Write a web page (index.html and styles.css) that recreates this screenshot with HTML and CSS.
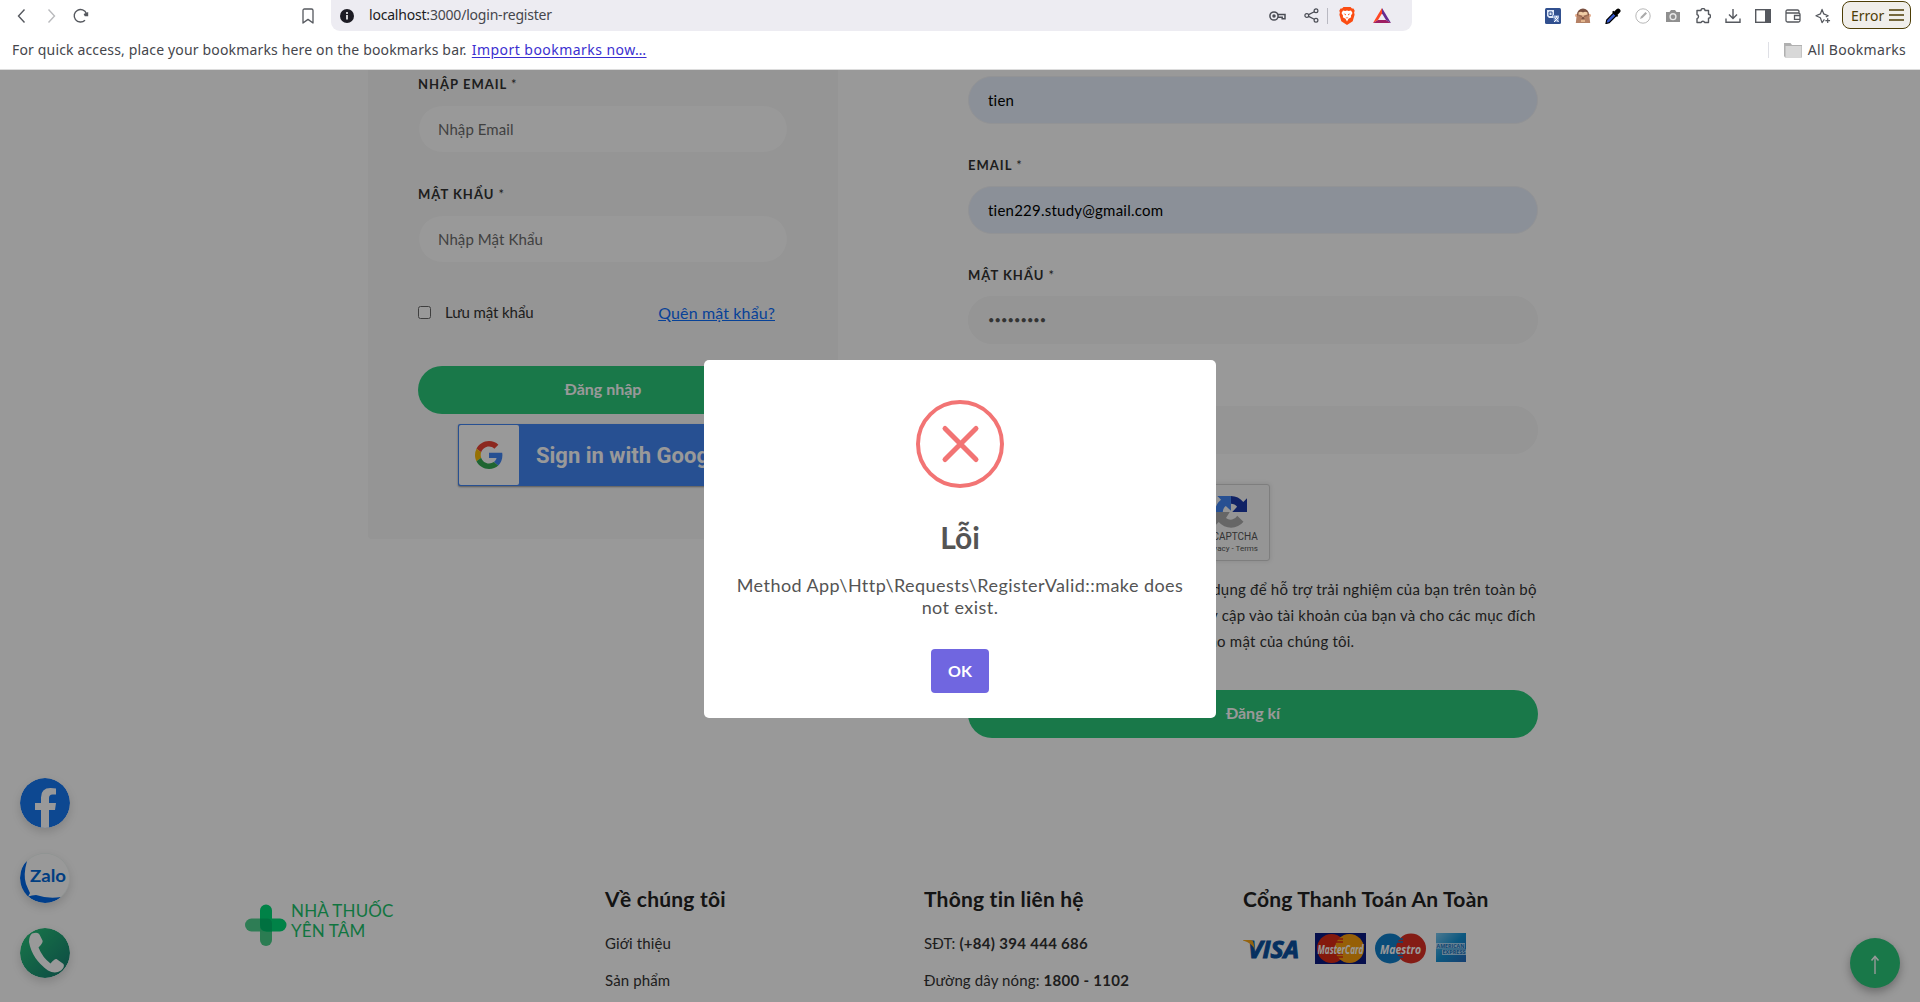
FILE: index.html
```html
<!DOCTYPE html>
<html lang="vi">
<head>
<meta charset="utf-8">
<title>Đăng nhập - Nhà thuốc Yên Tâm</title>
<link rel="stylesheet" href="styles.css">
</head>
<body>
<header class="browser">
  <div class="toolbar">
    <div class="nav">
      <svg width="9" height="16" viewBox="0 0 9 16" fill="none" stroke="#55585e" stroke-width="1.4"><path d="M7.500 1.500 1.500 8l6 6.500"/></svg>
      <svg width="9" height="16" viewBox="0 0 9 16" fill="none" stroke="#b9babd" stroke-width="1.400"><path d="M1.500 1.500 7.500 8l-6 6.500"/></svg>
      <svg width="16" height="16" viewBox="0 0 16 16" fill="none" stroke="#55585e" stroke-width="1.400"><path d="M12 12.200A6.300 6.300 0 1 1 13.400 5.500"/><path d="M15.200 4v4.200h-3.400l-1.200-2.200z" fill="#55585e" stroke="none"/></svg>
    </div>
    <svg class="save" width="12" height="16" viewBox="0 0 12 16" fill="none" stroke="#55585e" stroke-width="1.300" stroke-linejoin="round"><path d="M1 2.500Q1 1 2.500 1h7Q11 1 11 2.500V15l-5-3.600L1 15z"/></svg>
    <div class="address">
      <svg width="14" height="14" viewBox="0 0 14 14"><circle cx="7" cy="7" r="7" fill="#1d1c24"/><circle cx="7" cy="4" r="1" fill="#fff"/><path d="M6.200 6h1.600v4.500H6.200z" fill="#fff"/></svg>
      <span class="url"><b>localhost</b>:3000/login-register</span>
      <div class="address-icons">
        <svg width="17" height="12" viewBox="0 0 17 12" fill="none" stroke="#4b4d55" stroke-width="1.500"><circle cx="5" cy="6" r="4.100"/><circle cx="5" cy="6" r="1" fill="#4b4d55"/><path d="M9 4.500h7v4.200h-2.800V7.200H9"/></svg>
        <svg width="15" height="15" viewBox="0 0 15 15" fill="none" stroke="#4b4d55" stroke-width="1.200"><circle cx="2.800" cy="7.500" r="1.900"/><circle cx="12" cy="2.800" r="1.900"/><circle cx="12" cy="12.200" r="1.900"/><path d="M4.600 6.600l5.700-2.900M4.600 8.400l5.700 2.900"/></svg>
        <i class="sep"></i>
        <svg width="16" height="18" viewBox="0 0 16 18"><path d="M4.500 0h7l1.500 1.600 1.500-.2 1.200 2.300-.6 1.800.5 2.300-1.900 6.400L8 18l-5.700-3.800L.4 7.800l.5-2.300L.3 3.700l1.200-2.300 1.500.2z" fill="#fb4c12"/><path d="M4 3.500l2.200.4L8 3.500l1.800.4 2.200-.4L13.500 6l-1.600 2.800.3 1.400-2.700 1.500L8 14.500l-1.500-2.800-2.700-1.500.3-1.400L2.500 6z" fill="#fff"/><path d="M4.500 6.500l2.300.4.200 1.600zM11.500 6.500l-2.300.4-.2 1.600zM6.500 10.500h3L8 11.600z" fill="#fb4c12"/></svg>
        <svg width="18" height="15" viewBox="0 0 18 15"><path d="M9 0L0 15l5-3 4-6.500z" fill="#ff4724"/><path d="M0 15h18l-5-3H5z" fill="#9e1f63"/><path d="M9 0l9 15-5-3-4-6.500z" fill="#662d91"/></svg>
      </div>
    </div>
    <div class="extensions">
      <svg width="16" height="16" viewBox="0 0 16 16"><rect width="16" height="16" rx="1.500" fill="#31508f"/><path d="M2 2h7v8H4L2 8z" fill="#dfe8f8"/><path d="M4 4h3v3.500H4z" fill="none" stroke="#31508f"/><path d="M8 7h6v7H9z" fill="#6f8cc4"/><path d="M9 9h5M11.500 8v1.500M13 10l-4 4M10 10l3.500 4" stroke="#fff" fill="none"/></svg>
      <svg width="16" height="16" viewBox="0 0 16 16"><circle cx="1.800" cy="7.500" r="1.800" fill="#e3ab8b"/><circle cx="14.200" cy="7.500" r="1.800" fill="#e3ab8b"/><path d="M2 6.500a6 6 0 0 1 12 0V10l-2 5H4l-2-5z" fill="#7a5040"/><path d="M3.500 4.500Q6 3 8 4.500q2-1.500 4.500 0V9h-9z" fill="#f0cda6"/><path d="M.8 15l.7-6L3 6.200l5 1.600-2 4V15zM15.200 15l-.7-6L13 6.200 8 7.800l2 4V15z" fill="#b58165"/><path d="M3.500 7.500l3.500 1M12.500 7.500L9 8.500" stroke="#7a5040" stroke-width=".6"/><path d="M6 11.500h4v3H6z" fill="#e2b48c"/></svg>
      <svg width="16" height="16" viewBox="0 0 16 16"><path d="M8.500 5l2.700 2.700-7 7L1 15.500l.7-3.500z" fill="#3659cd" stroke="#000" stroke-width="1.200"/><path d="M7 4l5 5 1.200-1.200-.8-.8 2.400-2.400A2.200 2.200 0 0 0 11.500 1.300L9.200 3.600l-.8-.8z"/></svg>
      <svg width="16" height="16" viewBox="0 0 16 16" fill="none" stroke="#b8b8b8"><circle cx="8" cy="8" r="7.200"/><path d="M5 11l1-2.500L10.500 4 12 5.500 7.500 10z" fill="#aaa" stroke="none"/></svg>
      <svg width="16" height="16" viewBox="0 0 16 16"><path d="M1 4h3.500L6 2h4l1.500 2H15v10H1z" fill="#8f8f8f"/><circle cx="8" cy="8.700" r="3.600" fill="#e8e8e8"/><circle cx="8" cy="8.700" r="2.200" fill="#8f8f8f"/></svg>
      <svg width="16" height="16" viewBox="0 0 16 16" fill="none" stroke="#55585e" stroke-width="1.400" stroke-linejoin="round"><path d="M2 2.500h4a2 2 0 0 1 4 0h3.500v3.800a2 2 0 0 1 0 4V14.500h-3.800a1.900 1.900 0 0 0-3.600 0H2v-3.800a2.200 2.200 0 0 0 0-4.200z"/></svg>
      <svg width="16" height="16" viewBox="0 0 16 16" fill="none" stroke="#55585e" stroke-width="1.400"><path d="M8 1v9M4 6.500l4 4 4-4M1 10.500v3.800h14v-3.800"/></svg>
      <svg width="16" height="16" viewBox="0 0 16 16"><rect x=".7" y="1.700" width="14.600" height="12.600" fill="none" stroke="#55585e" stroke-width="1.400"/><path d="M10 1h6v14h-6z" fill="#55585e"/></svg>
      <svg width="16" height="16" viewBox="0 0 16 16" fill="none" stroke="#55585e" stroke-width="1.300"><path d="M14 5V3.500Q14 2 12.500 2h-10Q1 2 1 3.500v9Q1 14 2.500 14h11q1.500 0 1.500-1.500v-6Q15 5 13.500 5H1.500M15 7.500H9.500v3.800H15"/></svg>
      <svg width="16" height="16" viewBox="0 0 17 16" fill="none" stroke="#55585e" stroke-width="1.300" stroke-linejoin="round"><path d="M10 11.500L7.500 15 5.700 9.800 1 7.800l4.700-2L7.500 1l1.800 4.800L14 7.800l-2.500 1.100M13.500 10.500v5M11 13h5"/></svg>
      <div class="error"><span>Error</span><svg width="15" height="12" viewBox="0 0 15 12" stroke="#4d3d05" stroke-width="1.400"><path d="M0 1h15M0 6h15M0 11h15"/></svg></div>
    </div>
  </div>
  <div class="bookmarks">
    <span class="hint">For quick access, place your bookmarks here on the bookmarks bar.</span>
    <span class="import">Import bookmarks now…</span>
    <div class="all"><i class="sep"></i>
      <svg width="18" height="16" viewBox="0 0 18 16"><path d="M0 1h6.500L8 3h10v12.500H1L0 14z" fill="#b0b0b0"/><path d="M1.500 4h16v11h-16z" fill="#d8d8d8"/></svg>
      <span>All Bookmarks</span></div>
  </div>
</header>

<div class="viewport">
  <main class="forms">
    <section class="login">
      <label>NHẬP EMAIL <em>*</em></label>
      <div class="input">Nhập Email</div>
      <label>MẬT KHẨU <em>*</em></label>
      <div class="input">Nhập Mật Khẩu</div>
      <div class="remember"><i class="check"></i><span>Lưu mật khẩu</span><a>Quên mật khẩu?</a></div>
      <div class="btn"><span>Đăng nhập</span></div>
      <div class="google">
        <div class="g-logo"><svg width="28" height="28" viewBox="0 0 48 48"><path fill="#EA4335" d="M24 9.500c3.540 0 6.710 1.220 9.210 3.600l6.850-6.850C35.900 2.380 30.470 0 24 0 14.620 0 6.510 5.380 2.560 13.220l7.980 6.190C12.430 13.720 17.740 9.500 24 9.500z"/><path fill="#4285F4" d="M46.980 24.550c0-1.570-.15-3.090-.38-4.550H24v9.020h12.940c-.58 2.960-2.260 5.480-4.780 7.180l7.730 6c4.510-4.180 7.090-10.360 7.090-17.650z"/><path fill="#FBBC05" d="M10.530 28.590A14.500 14.500 0 0 1 9.770 24c0-1.600.27-3.140.76-4.590l-7.980-6.190A23.900 23.900 0 0 0 0 24c0 3.880.92 7.540 2.560 10.780z"/><path fill="#34A853" d="M24 48c6.480 0 11.930-2.130 15.890-5.810l-7.730-6c-2.150 1.450-4.920 2.300-8.160 2.300-6.260 0-11.570-4.220-13.470-9.910l-7.980 6.190C6.510 42.620 14.620 48 24 48z"/></svg></div>
        <span>Sign in with Google</span>
      </div>
    </section>
    <section class="register">
      <div class="input auto">tien</div>
      <label>EMAIL <em>*</em></label>
      <div class="input auto">tien229.study@gmail.com</div>
      <label>MẬT KHẨU <em>*</em></label>
      <div class="input grey dots">•••••••••</div>
      <div class="input grey confirm"></div>
      <div class="captcha">
        <div class="badge">
          <svg width="32" height="32" viewBox="0 0 64 64"><path d="M64 31.900V4.600l-7.500 7.500A32 32 0 0 0 32 0v15.600c5 0 9.500 2.300 12.200 6l-9.700 10.300z" fill="#1c3aa9"/><path d="M31.900 0H4.600l7.500 7.600A32 32 0 0 0 0 32h15.600c0-5 2.300-9.500 6-12.200l10.300 9.700z" fill="#4285f4"/><path d="M0 32v27.400l7.500-7.500A32 32 0 0 0 57 51.500L44.500 39.500A15 15 0 0 1 22 44l7.500-12z" fill="#ababab"/></svg>
          <span class="name">reCAPTCHA</span><span class="terms">Privacy - Terms</span>
        </div>
      </div>
      <p class="policy"><span>Dữ liệu cá nhân của bạn sẽ được sử dụng để hỗ trợ trải nghiệm của bạn trên toàn bộ</span><span>trang web này, để quản lý quyền truy cập vào tài khoản của bạn và cho các mục đích</span><span>khác được mô tả trong chính sách bảo mật của chúng tôi.</span></p>
      <div class="btn"><span>Đăng kí</span></div>
    </section>
  </main>
  <footer class="footer">
    <div class="logo">
      <svg width="42" height="42" viewBox="0 0 42 42"><rect x="15" y="14" width="12" height="28" rx="6" fill="#35ca7c" opacity=".9"/><rect x="0" y="14.500" width="28" height="13" rx="6.500" fill="#3bcb82" opacity=".9"/><path d="M15 6.500a6 6 0 0 1 12 0v8h8a6.500 6.500 0 0 1 0 13H22q-7 0-7-7z" fill="#00d977"/><path d="M15 14.500h7q5 0 5 5v8h-5q-7 0-7-7z" fill="#00bd6c"/></svg>
      <div class="brand"><span>NHÀ THUỐC</span><span>YÊN TÂM</span></div>
    </div>
    <div class="col"><h4>Về chúng tôi</h4><p>Giới thiệu</p><p>Sản phẩm</p></div>
    <div class="col"><h4>Thông tin liên hệ</h4><p>SĐT: <b>(+84) 394 444 686</b></p><p>Đường dây nóng: <b>1800 - 1102</b></p></div>
    <div class="col"><h4>Cổng Thanh Toán An Toàn</h4>
      <svg class="cards" width="224" height="32" viewBox="0 0 224 32" font-family="Open Sans, sans-serif" font-weight="700" font-style="italic">
        <defs><linearGradient id="amex" x1="0" y1="0" x2="1" y2="1"><stop offset="0" stop-color="#7cc8f0"/><stop offset=".5" stop-color="#1492d4"/><stop offset="1" stop-color="#2569bb"/></linearGradient></defs>
        <text x="5" y="24.500" font-size="24" fill="#0a51a0" stroke="#0a51a0" textLength="51" lengthAdjust="spacingAndGlyphs">VISA</text><path d="M0 7h7q3 0 3.500 3l1.500 7Q9 10 0 7.600z" fill="#f7a71c"/>
        <path d="M72 0h51v31H72z" fill="#0a1a80"/><circle cx="88.500" cy="15.500" r="14.500" fill="#dd2a14"/><circle cx="106.500" cy="15.500" r="14.500" fill="#fb9f0c"/><path d="M94 6h6M93 9h7M93 21h7M94 24h6" stroke="#dd2a14" stroke-width="1.500"/><text x="74.500" y="20.500" font-size="13" fill="#fff" textLength="46" lengthAdjust="spacingAndGlyphs">MasterCard</text>
        <circle cx="147" cy="15.500" r="15" fill="#0f7fca"/><circle cx="168" cy="15.500" r="15" fill="#dd2f24"/><path d="M154 6h6M153 9h7M153 21h7M154 24h6" stroke="#0f7fca" stroke-width="1.500"/><text x="137" y="20.500" font-size="13" fill="#fff" textLength="41" lengthAdjust="spacingAndGlyphs">Maestro</text>
        <path d="M193 0h30v29h-30z" fill="url(#amex)"/><path d="M193 10h29v5.500h-29zM199 16.500h24v5.500h-24z" fill="#dcefff" opacity=".75"/><g font-size="5.500" font-style="normal" fill="#1673bd"><text x="193.500" y="14.800" textLength="28" lengthAdjust="spacingAndGlyphs">AMERICAN</text><text x="199.500" y="21.300" textLength="23" lengthAdjust="spacingAndGlyphs">EXPRESS</text></g>
      </svg>
    </div>
  </footer>

  <div class="social">
    <svg width="50" height="50" viewBox="0 0 50 50"><circle cx="25" cy="25" r="25" fill="#1778f2"/><path d="M21 50V32h-6v-7h6v-5.500Q21 10 30.500 10q3 0 5.500.5v6h-3.500q-3.500 0-3.500 3.500v5h7l-1 7h-6v18z" fill="#fff"/></svg>
    <svg width="50" height="50" viewBox="0 0 50 50"><circle cx="25" cy="25" r="24.800" fill="#fff" stroke="#cfe5dd" stroke-width=".4"/><path d="M7 8Q3 22 6 31q3 7 4 9-1 3-3 4Q0 37 0 25T7 8z" fill="#0068e8"/><path d="M8 43.500q4-1.500 8-1.500 12 4 25 2-7 6-16 6T8 43.500z" fill="#0068e8"/><text x="10" y="29.200" font-family="Lato, sans-serif" font-weight="700" font-size="17" fill="#0068d8" textLength="36" lengthAdjust="spacingAndGlyphs">Zalo</text></svg>
    <svg width="50" height="50" viewBox="0 0 50 50"><defs><linearGradient id="call" x1="0" y1="0" x2="1" y2="1"><stop offset="0" stop-color="#2ac87b"/><stop offset="1" stop-color="#157a70"/></linearGradient></defs><circle cx="25" cy="25" r="25" fill="url(#call)"/><path d="M12 5.500q6-2 7.500 1l3 6q1 2-4 7 4 10 12 16 4-5 6-4.500l7 5q1.500 3-2.500 6.500-6 4-13 0Q12 31 9 14q0-6 3-8.500z" fill="#fff"/></svg>
  </div>
  <div class="to-top"><svg width="12" height="20" viewBox="0 0 12 20" fill="none" stroke="#fff"><path d="M6 19V2" stroke-width="1.400"/><path d="M2.500 5.500L6 1.500l3.500 4" stroke-width="1.600"/></svg></div>

  <div class="overlay">
    <div class="modal">
      <svg width="88" height="88" viewBox="0 0 88 88" fill="none" stroke="#f27474"><circle cx="44" cy="44" r="42" stroke-width="4"/><path d="M29 28.500l31 31M60 28.500l-31 31" stroke-width="5" stroke-linecap="round"/></svg>
      <h2>Lỗi</h2>
      <p>Method App\Http\Requests\RegisterValid::make does<br>not exist.</p>
      <div class="ok">OK</div>
    </div>
  </div>
</div>
</body>
</html>
```
FILE: styles.css
```css
* { box-sizing: border-box; }
body { margin: 0; width: 1920px; height: 1002px; overflow: hidden; background: #fff; color: #333; font-family: Lato, "Noto Sans", sans-serif; font-size: 15px; }
svg { display: block; flex: none; }
h2, h4, p { margin: 0; }
.browser { height: 70px; border-bottom: 1px solid #dcdcdc; color: #45464c; font-family: "Noto Sans", "Open Sans", sans-serif; font-size: 14px; }
.toolbar { display: flex; height: 31px; align-items: center; }
.nav { display: flex; gap: 21px; width: 284px; padding-left: 17px; }
.nav svg:last-child { margin-left: -4px; }
.save { margin-left: 18px; margin-right: 17px; }
.address { display: flex; align-items: center; width: 1081px; height: 31px; padding-left: 9px; background: #edecf2; border-radius: 0 0 9px 9px; }
.url { margin: -2px 0 0 15px; letter-spacing: -.2px; }
.url b { font-weight: 400; color: #1b1b22; }
.address-icons { display: flex; align-items: center; margin-left: auto; padding-right: 21px; }
.address-icons svg:nth-of-type(2) { margin-left: 18px; }
.sep { width: 1px; height: 16px; background: #b9b9c2; }
.address-icons .sep { margin: 0 11px 0 8px; }
.address-icons svg:last-child { margin-left: 18px; }
.extensions { display: flex; align-items: center; gap: 14px; margin-left: 133px; }
.error { display: flex; align-items: center; justify-content: space-between; width: 69px; height: 28px; margin: -1px 0 0 -3px; padding: 0 6px 0 8px; border: 1px solid #4d3d05; border-radius: 8px; background: #f0eeea; color: #4d3d05; }
.bookmarks { display: flex; align-items: center; height: 37px; padding: 0 14px 0 12px; }
.hint { letter-spacing: .16px; }
.import { margin-left: 5px; color: #3b2fd0; letter-spacing: .45px; text-decoration: underline; text-underline-offset: 2px; }
.all { display: flex; align-items: center; margin-left: auto; letter-spacing: .3px; }
.all .sep { background: #dfe0e6; margin-right: 15px; }
.all span { margin-left: 6px; }

.viewport { position: relative; height: 932px; overflow: hidden; }
.forms { display: grid; grid-template-columns: 470px 570px; column-gap: 130px; padding-left: 368px; height: 798px; }
.login { height: 469px; padding: 4px 50px 0; background: #f8f8f8; border-radius: 0 0 4px 4px; }
label { display: block; height: 20px; line-height: 21px; font-size: 13px; font-weight: 700; letter-spacing: 1px; white-space: nowrap; }
label em { font-style: normal; font-weight: 400; }
.input { height: 48px; padding-left: 19px; border: 1px solid #f8f8f8; border-radius: 24px; background: #fff; color: #6c6c6c; line-height: 46px; letter-spacing: .08px; }
.login .input { margin-top: 11px; margin-bottom: 31px; }
.remember { display: flex; align-items: center; height: 24px; margin-top: 37px; }
.check { width: 13px; height: 13px; border: 1px solid #6a6a6a; border-radius: 2.500px; background: #fff; }
.remember span { margin-left: 14px; letter-spacing: -.1px; }
.remember a { margin-left: auto; margin-right: 13px; color: #0d6efd; font-size: 16px; letter-spacing: .14px; text-decoration: underline; }
.btn { height: 48px; border-radius: 24px; background: #2ac87b; color: #fff; font-weight: 700; font-size: 16px; line-height: 46px; text-align: center; }
.login .input + .remember { margin-top: 37px; }
.login .btn { margin-top: 42px; }
.google { display: flex; align-items: center; width: 290px; height: 62px; margin: 10px auto 0; padding: 1px; border-radius: 2px; background: #4285f4; box-shadow: 0 1px 2px rgba(0,0,0,.4); color: #fff; font: 700 22px Roboto, sans-serif; }
.g-logo { display: grid; place-items: center; width: 60px; height: 60px; background: #fff; border-radius: 2px; }
.google span { margin-left: 17px; }
.register { padding-top: 6px; }
.register label { margin-top: 31px; margin-bottom: 11px; }
.input.auto { background: #e8f0fe; color: #000; border-color: #f3f5f9; letter-spacing: .23px; }
.input.grey { background: #f8f8f8; border-color: #f8f8f8; }
.input.dots { color: #555; font-size: 11px; letter-spacing: .1px; }
.confirm { margin-top: 62px; }
.captcha { display: flex; justify-content: flex-end; width: 304px; height: 77px; margin-top: 30px; margin-left: -2px; border: 1px solid #d3d3d3; border-radius: 3px; background: #f9f9f9; box-shadow: 0 0 4px 1px rgba(0,0,0,.08); }
.badge { display: flex; flex-direction: column; align-items: center; padding-top: 11px; margin-right: 11px; color: #555; font-family: Roboto, sans-serif; }
.badge .name { margin-top: 3px; font-size: 10px; line-height: 12px; }
.badge .terms { margin-top: 1px; font-size: 8px; line-height: 10px; }
.policy { margin-top: 15px; line-height: 26px; letter-spacing: .21px; white-space: nowrap; }
.policy span { display: block; }
.register .btn { margin-top: 36px; }

.footer { display: grid; grid-template-columns: 360px 319px 319px auto; padding-left: 245px; }
.logo { display: flex; padding-top: 36px; }
.brand { display: flex; flex-direction: column; margin: -3px 0 0 4px; color: #1bc46c; font-size: 17px; letter-spacing: .15px; line-height: 20px; }
.col h4 { padding-top: 16px; color: #222; font-size: 21px; letter-spacing: .21px; line-height: 29px; }
.col p { line-height: 37px; letter-spacing: .12px; }
.col b { letter-spacing: .3px; }
.col h4 + p { margin-top: 12px; }
.cards { margin-top: 20px; }
.social { position: absolute; left: 20px; top: 708px; display: flex; flex-direction: column; gap: 25px; }
.social svg { border-radius: 50%; box-shadow: 0 4px 10px rgba(0,0,0,.15); }
.to-top { position: absolute; left: 1850px; top: 868px; display: grid; place-items: center; width: 50px; height: 50px; padding-top: 4px; border-radius: 50%; background: #2ac87b; box-shadow: 0 4px 10px rgba(0,0,0,.3); }
.overlay { position: absolute; inset: 0; display: grid; place-content: center; padding-top: 6px; background: rgba(0,0,0,.4); }
.modal { display: flex; flex-direction: column; align-items: center; width: 512px; height: 358px; padding-top: 40px; border-radius: 5px; background: #fff; color: #545454; text-align: center; }
.modal h2 { margin-top: 27px; font-size: 30px; line-height: 44px; }
.modal p { margin-top: 15px; font-size: 18px; letter-spacing: .44px; line-height: 22px; white-space: nowrap; }
.ok { width: 58px; height: 44px; margin-top: 31px; border-radius: 4px; background: #7066e0; color: #fff; font-size: 16px; font-weight: 700; line-height: 43px; }
```
